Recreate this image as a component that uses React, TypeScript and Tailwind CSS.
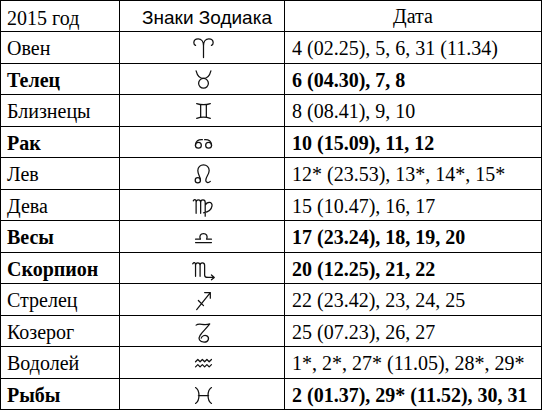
import type { ReactNode } from "react";

// zodiac glyphs, thin strokes like the printed table
const signs: Record<string, ReactNode> = {
  aries: (
    <path d="M11 19V8.5C11 4.5 9 2.5 6.3 2.5C4 2.5 2.5 4 2.5 6C2.5 7.2 3.2 8 4 8.3M11 8.5C11 4.5 13 2.5 15.7 2.5C18 2.5 19.5 4 19.5 6C19.5 7.2 18.8 8 18 8.3" />
  ),
  taurus: (
    <>
      <circle cx="11" cy="13.5" r="4.3" />
      <path d="M4.5 2.5C5.5 6.5 8 9.2 11 9.2C14 9.2 16.5 6.5 17.5 2.5" />
    </>
  ),
  gemini: <path d="M5 4Q11 6 17 4M5 17Q11 15 17 17M8.5 5V16M13.5 5V16" />,
  cancer: (
    <>
      <circle cx="6.5" cy="12.5" r="2.6" />
      <path d="M3.9 12.5C3.9 9 6.5 7.3 10 7.6" />
      <circle cx="15.5" cy="12.5" r="2.6" />
      <path d="M18.1 12.5C18.1 9 15.5 7.3 12 7.6" />
    </>
  ),
  leo: (
    <>
      <circle cx="6" cy="16" r="2.3" />
      <path d="M8.3 16C8.3 13 6 11 6 7.5C6 4.5 8.3 2.5 11 2.5C13.7 2.5 16 4.5 16 7.5C16 11 13 13 13 16C13 18 15 19 17 17" />
    </>
  ),
  virgo: (
    <path d="M2 6C3 4.5 4.5 4.5 4.5 7V17M4.5 7.5C4.5 4.5 8.5 4.5 8.5 7.5V17M8.5 7.5C8.5 4.5 12.5 4.5 12.5 7.5V19.5M12.5 10C14 6.5 19 6.5 18.5 10.5C18 14 14.5 16 11 16.5" />
  ),
  libra: <path d="M4 15.5H18M4 12.5H8.3C7 9.5 8.5 7.5 11 7.5C13.5 7.5 15 9.5 13.7 12.5H18" />,
  scorpio: (
    <path d="M1.5 6C2.5 4.5 4 4.5 4 7V17M4 7.5C4 4.5 8 4.5 8 7.5V17M8 7.5C8 4.5 12 4.5 12 7.5V16C12 17.5 13.5 18 15 18H20M18 15.8L20.5 18L18 20" />
  ),
  sagittarius: <path d="M5 19L17 4M12 4H17V9M6.5 11L11 15.5" />,
  capricorn: (
    <path d="M4.5 4.5C7 2.5 11 5 16.5 3.5C13.5 7.5 10 10.5 8 13.5C6 16.5 7.5 19.5 11.5 19.5C15.5 19.5 16.5 15.5 14 14C12 13 9.5 14 9 16" />
  ),
  aquarius: (
    <path d="M4 9.5L6 7.5L8 9.5L10 7.5L12 9.5L14 7.5L16 9.5L18 7.5M4 14L6 12L8 14L10 12L12 14L14 12L16 14L18 12" />
  ),
  pisces: <path d="M4 4C8 6.5 8 15.5 4 18M18 4C14 6.5 14 15.5 18 18M6.5 11H15.5" />,
};

const rows = [
  { name: "Овен", sign: "aries", date: "4 (02.25), 5, 6, 31 (11.34)", bold: false },
  { name: "Телец", sign: "taurus", date: "6 (04.30), 7, 8", bold: true },
  { name: "Близнецы", sign: "gemini", date: "8 (08.41), 9, 10", bold: false },
  { name: "Рак", sign: "cancer", date: "10 (15.09), 11, 12", bold: true },
  { name: "Лев", sign: "leo", date: "12* (23.53), 13*, 14*, 15*", bold: false },
  { name: "Дева", sign: "virgo", date: "15 (10.47), 16, 17", bold: false },
  { name: "Весы", sign: "libra", date: "17 (23.24), 18, 19, 20", bold: true },
  { name: "Скорпион", sign: "scorpio", date: "20 (12.25), 21, 22", bold: true },
  { name: "Стрелец", sign: "sagittarius", date: "22 (23.42), 23, 24, 25", bold: false },
  { name: "Козерог", sign: "capricorn", date: "25 (07.23), 26, 27", bold: false },
  { name: "Водолей", sign: "aquarius", date: "1*, 2*, 27* (11.05), 28*, 29*", bold: false },
  { name: "Рыбы", sign: "pisces", date: "2 (01.37), 29* (11.52), 30, 31", bold: true },
];

function Sign({ id }: { id: string }) {
  return (
    <svg
      viewBox="0 0 22 22"
      className="w-[25px] h-[25px] mx-auto mt-[3px]"
      fill="none"
      stroke="#111"
      strokeWidth={1.1}
      strokeLinecap="round"
      strokeLinejoin="round"
    >
      {signs[id]}
    </svg>
  );
}

export default function App() {
  return (
    <div className="w-[543px] h-[413px] bg-white text-black font-['Liberation_Serif','Times_New_Roman',serif]">
      <table className="w-[542px] border-collapse table-fixed text-[20px] leading-none">
        <colgroup>
          <col className="w-[119px]" />
          <col className="w-[165px]" />
          <col className="w-[257px]" />
        </colgroup>
        <thead>
          <tr className="h-[31px]">
            <th className="border border-black px-[6px] pt-[3px] text-left font-normal">2015 год</th>
            <th className="border border-black pl-[10px] pt-[2px] text-center font-normal font-['Liberation_Sans',sans-serif] text-[19px]">
              Знаки Зодиака
            </th>
            <th className="border border-black text-center font-normal align-top pt-[5px]">Дата</th>
          </tr>
        </thead>
        <tbody>
          {rows.map((r) => (
            <tr key={r.name} className="h-[31.5px]">
              <td className={`border border-black px-[6px] pt-[2px] ${r.bold ? "font-bold" : ""}`}>{r.name}</td>
              <td className="border border-black pl-[3px] align-middle">
                <Sign id={r.sign} />
              </td>
              <td className={`border border-black px-[7px] pt-[2px] whitespace-nowrap ${r.bold ? "font-bold" : ""}`}>
                {r.date}
              </td>
            </tr>
          ))}
        </tbody>
      </table>
    </div>
  );
}
